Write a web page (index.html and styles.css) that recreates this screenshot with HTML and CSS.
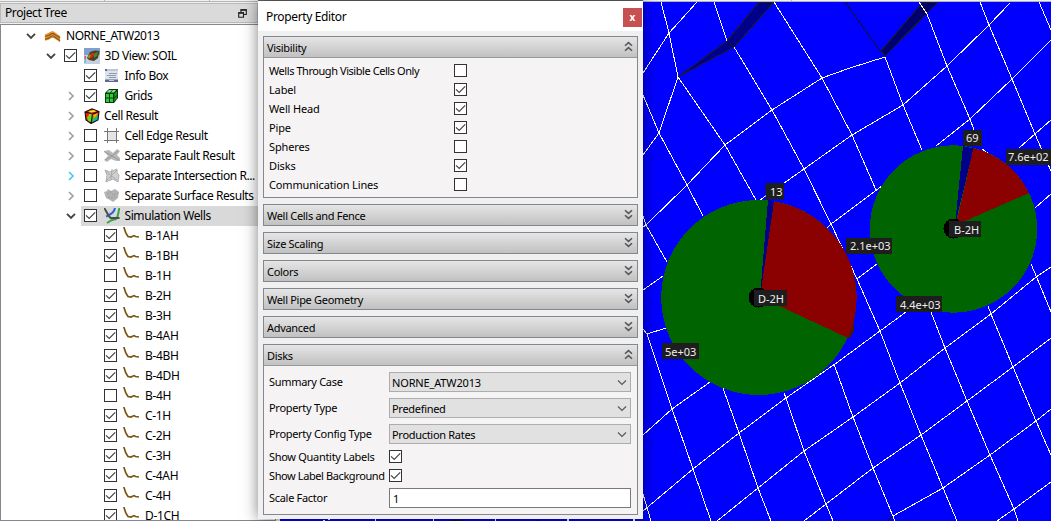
FILE: index.html
```html
<!DOCTYPE html>
<html lang="en">
<head>
<meta charset="utf-8">
<title>Property Editor</title>
<link rel="stylesheet" href="styles.css">
</head>
<body>
<svg class="defs" aria-hidden="true">
  <defs>
    <symbol id="tick" viewBox="0 0 13 13"><path d="M2 6.3 5.2 9.5 11.2 3.3" fill="none" stroke="#444" stroke-width="1.2"/></symbol>
    <symbol id="open" viewBox="0 0 10 10"><path d="M1 2.8 5 6.8 9 2.8" fill="none" stroke="#444" stroke-width="1.9"/></symbol>
    <symbol id="closed" viewBox="0 0 10 10"><path d="M3 1 7 5 3 9" fill="none" stroke="currentColor" stroke-width="1.7"/></symbol>
    <symbol id="well" viewBox="0 0 16 14"><path d="M.8 0 2.8 6 5 9.5 8 10 11 8.6 12.500 9.500 16 10" fill="none" stroke="#7b5410" stroke-width="1.7"/></symbol>
    <symbol id="down" viewBox="0 0 9 11"><path d="M1 1.2 4.5 4.4 8 1.2M1 6.2 4.5 9.4 8 6.2" fill="none" stroke="#555" stroke-width="1.5"/></symbol>
    <symbol id="up" viewBox="0 0 9 11"><path d="M1 4.8 4.5 1.6 8 4.8M1 9.8 4.5 6.6 8 9.8" fill="none" stroke="#555" stroke-width="1.5"/></symbol>
    <symbol id="arrow" viewBox="0 0 10 7"><path d="M1 1.5 5 5.5 9 1.5" fill="none" stroke="#555" stroke-width="1.1"/></symbol>
  </defs>
</svg>
<div class="app">
  <div class="topstrip"><i class="s1"></i><i class="s2"></i><i class="s3"></i><i class="s4"></i></div>
  <div class="workspace">
    <aside class="project">
      <header class="dock-title"><span>Project Tree</span>
        <svg width="9" height="9" viewBox="0 0 9 9"><path d="M3 3V.8H8.3V5.5H6M.7 3.7H5.5V8.3H.7Z" fill="none" stroke="#222" stroke-width="1.1"/><path d="M2.5 1H8.8M.2 4H6" stroke="#222" stroke-width="1.6"/></svg>
      </header>
      <div class="tree">
        <div class="row l0"><svg class="tw"><use href="#open"/></svg><svg class="ic wide" viewBox="0 0 18 16"><path d="M1 6.500 5 4.500 8 3H10L14 6 17 8V14.500L14 12.500 10 10H8L5 12 1 13Z" fill="#e8932c"/><path d="M1 8.500 5 7.300 8 5.500H10L13 7.500 17 10M1 11.500 5 10.300 8 8H10L13 10 17 13" fill="none" stroke="#8b5a22" stroke-width="1.300"/></svg><span>NORNE_ATW2013</span></div>
        <div class="row l1"><svg class="tw"><use href="#open"/></svg><i class="cb"><svg><use href="#tick"/></svg></i><svg class="ic" viewBox="0 0 16 16"><path d="M0 0H16V16H0Z" fill="#7f9fd0"/><path d="M0 7H16V16H0Z" fill="#c3d0e4"/><path d="M3 10 6 4 11 2.500 15.500 3 14 10 10 13 5 12Z" fill="#513c1c"/><path d="M4 8 8 5 11 5 9 9 5 11Z" fill="#c62e14"/><path d="M10 6 14 3.500 13 8 10 10Z" fill="#3d8c33"/><path d="M4 9 6 6 6.500 8 5 10.500Z" fill="#8faa20"/><path d="M.5 8H1.7V11H.5Z" fill="#e23"/><path d="M.5 11H1.7V15H.5Z" fill="#28c7dd"/></svg><span>3D View: SOIL</span></div>
        <div class="row l2"><i class="tw"></i><i class="cb"><svg><use href="#tick"/></svg></i><svg class="ic" viewBox="0 0 16 16"><path d="M1 1H14V14H1Z" fill="#dce3ea"/><path d="M1 1H14V3H1Z" fill="#bbc7d8"/><path d="M1 1H3V3H1ZM1 11.500H14V14H1Z" fill="#626397"/><path d="M5 5.5H13M3 7.5H12M5 9.5H12" stroke="#8d9aaa"/><path d="M5 12H10V13H5Z" fill="#c5c8df"/></svg><span>Info Box</span></div>
        <div class="row l2"><svg class="tw gray"><use href="#closed"/></svg><i class="cb"><svg><use href="#tick"/></svg></i><svg class="ic" viewBox="0 0 16 16"><path d="M1 5 5 1 14 1V10L10 15H1Z" fill="#0b3a11"/><path d="M2 6H5V9.5H2ZM6 6H9V9.5H6ZM2 10.5H5V14H2ZM6 10.5H9V14H6Z" fill="#31cc3e"/><path d="M2.5 4.5 5 2H8L6 4.5ZM7 4.5 9 2H12L10 4.5Z" fill="#86e889"/><path d="M10.3 5.5 13 3V7L10.3 9.5ZM10.3 10.5 13 8V10L10.3 13.5Z" fill="#159524"/></svg><span>Grids</span></div>
        <div class="row l2"><svg class="tw gray"><use href="#closed"/></svg><svg class="ic cube" viewBox="0 0 16 16"><path d="M1 4 8 .8 15 3.5 14 12 7 15.5 2 12Z" fill="#ed1c12"/><path d="M5 5 9 5 8 14.7 4 13Z" fill="#ffb000"/><path d="M3 9 6 7 8 6 8 14 4 13Z" fill="#6edb18"/><path d="M4 3 11 2 12 3.5 7 4.500Z" fill="#ffec20"/><path d="M9 9 14 7V12L8 15Z" fill="#21cb43"/><path d="M10 12 14 8V12L9 15Z" fill="#19a9d0"/><path d="M9 7 14 5 13 7 10 10Z" fill="#ffb000"/><path d="M1 4 8 .8 15 3.5 14 12 7 15.5 2 12Z M1 4 8.5 6 15 3.5M8.5 6 7 15.5" fill="none" stroke="#111" stroke-width="1.1"/></svg><span>Cell Result</span></div>
        <div class="row l2"><svg class="tw gray"><use href="#closed"/></svg><i class="cb"></i><svg class="ic" viewBox="0 0 16 16"><path d="M4 4H13V12H4Z" fill="#e5e5e5"/><path d="M3.5 0V15M12.5 0V15M0 3.5H15M0 12.5H15" stroke="#777"/></svg><span>Cell Edge Result</span></div>
        <div class="row l2"><svg class="tw gray"><use href="#closed"/></svg><i class="cb"></i><svg class="ic" viewBox="0 0 16 16"><path d="M0 3 5 2 9 5 13 1 16 3 13 7 16 10V13L12 13 7 11 3 14 0 12 4 8Z" fill="#b8b8b8"/><path d="M0 3.5 8 8 15 12M1 12 8 8 14 3" fill="none" stroke="#999" stroke-width="1"/></svg><span>Separate Fault Result</span></div>
        <div class="row l2"><svg class="tw blue"><use href="#closed"/></svg><i class="cb"></i><svg class="ic" viewBox="0 0 16 16"><path d="M1 2 6 4 13 1V5L15 7 14 14 9 11 2 14 3 7Z" fill="#d0d0d0" stroke="#b0b0b0"/><path d="M1 3 13 12M13 2 2 13M8 1 7 12" stroke="#aaa"/></svg><span>Separate Intersection R...</span></div>
        <div class="row l2"><svg class="tw gray"><use href="#closed"/></svg><i class="cb"></i><svg class="ic" viewBox="0 0 16 16"><path d="M0 4 3 3 4 1 7 3 11 1 15 4 14 10 9 14 6 12 2 10Z" fill="#b3b3b3"/><path d="M3 6 7 4 9 7 14 5M4 9 8 10 12 8" fill="none" stroke="#a3a3a3" stroke-width="1.4" stroke-dasharray="2 1"/></svg><span>Separate Surface Results</span></div>
        <div class="row l2 selected"><svg class="tw"><use href="#open"/></svg><i class="cb"><svg><use href="#tick"/></svg></i><svg class="ic" viewBox="0 0 16 16"><path d="M11 0C10 5 7 6 2 8.500" fill="none" stroke="#2a61d8" stroke-width="2"/><path d="M15.500 0C14 4 15 8 12 11L8 12 3 15" fill="none" stroke="#38a447" stroke-width="2"/><path d="M0 0C3 3 4 9 7 10H15.500" fill="none" stroke="#4b5145" stroke-width="2"/></svg><span>Simulation Wells</span></div>
        <div class="row l3"><i class="cb"><svg><use href="#tick"/></svg></i><svg class="ic"><use href="#well"/></svg><span>B-1AH</span></div>
        <div class="row l3"><i class="cb"><svg><use href="#tick"/></svg></i><svg class="ic"><use href="#well"/></svg><span>B-1BH</span></div>
        <div class="row l3"><i class="cb"></i><svg class="ic"><use href="#well"/></svg><span>B-1H</span></div>
        <div class="row l3"><i class="cb"><svg><use href="#tick"/></svg></i><svg class="ic"><use href="#well"/></svg><span>B-2H</span></div>
        <div class="row l3"><i class="cb"><svg><use href="#tick"/></svg></i><svg class="ic"><use href="#well"/></svg><span>B-3H</span></div>
        <div class="row l3"><i class="cb"><svg><use href="#tick"/></svg></i><svg class="ic"><use href="#well"/></svg><span>B-4AH</span></div>
        <div class="row l3"><i class="cb"><svg><use href="#tick"/></svg></i><svg class="ic"><use href="#well"/></svg><span>B-4BH</span></div>
        <div class="row l3"><i class="cb"><svg><use href="#tick"/></svg></i><svg class="ic"><use href="#well"/></svg><span>B-4DH</span></div>
        <div class="row l3"><i class="cb"></i><svg class="ic"><use href="#well"/></svg><span>B-4H</span></div>
        <div class="row l3"><i class="cb"><svg><use href="#tick"/></svg></i><svg class="ic"><use href="#well"/></svg><span>C-1H</span></div>
        <div class="row l3"><i class="cb"><svg><use href="#tick"/></svg></i><svg class="ic"><use href="#well"/></svg><span>C-2H</span></div>
        <div class="row l3"><i class="cb"><svg><use href="#tick"/></svg></i><svg class="ic"><use href="#well"/></svg><span>C-3H</span></div>
        <div class="row l3"><i class="cb"><svg><use href="#tick"/></svg></i><svg class="ic"><use href="#well"/></svg><span>C-4AH</span></div>
        <div class="row l3"><i class="cb"><svg><use href="#tick"/></svg></i><svg class="ic"><use href="#well"/></svg><span>C-4H</span></div>
        <div class="row l3"><i class="cb"><svg><use href="#tick"/></svg></i><svg class="ic"><use href="#well"/></svg><span>D-1CH</span></div>
      </div>
    </aside>
    <main class="view">
      <svg class="scene" width="771" height="519" viewBox="280 2 771 519">
        <path d="M280 2H1051V521H280Z" fill="#00f"/>
        <g shape-rendering="crispEdges">
          <path d="M678 77 727 41 759 2H774L734 47Z" fill="#00008b" stroke="#1a1a2a"/>
          <path d="M881 51 923 2H938L885 56Z" fill="#00006e" stroke="#1a1a2a"/>
          <path d="M845 2 881 52M727 41 734 47M923 2 927 14M893 516 888 520M450 520.5H463M536 520.5H538" stroke="#101030"/>
          <path class="mesh" d="M661 2 669 33 678 77 659 133 643 155M697 2 669 33 643 73M643 95 659 133 687 185 703 216M714 2 727 41M734 47 772 110 804 169 831 224 857 279 880 331 900 383 921 435 943 488 957 521M678 77 725 145 756 200M774 2 822 78 852 135 876 190M885 57 850 68 822 78 772 110 725 145 687 185 646 225 643 227M643 216 646 225 667 262M760 200 804 169 852 135 903 105 947 66 989 25 1010 3M827 228 831 224 882 186M919 2 927 14 947 66 970 119 974 130M885 57 903 105 922 150M980 2 989 25 1012 79 1035 134 1051 171M1039 2 1051 30M1051 40 1012 79 970 119 936 146M1051 120 1019 148M1035 208 1051 194M982 149 1006 166M643 290 663 276M643 329 647 334 666 328M647 334 672 409 693 469 711 521M643 435 672 409 710 382M723 388 739 433 758 488 771 521M643 511 693 469 739 433 786 398 835 364 880 331 906 312M784 393 786 398 804 451 826 504 833 521M717 521 758 488 804 451 853 417 900 383 945 348 991 314 1036 277 1051 267M834 364 853 417 873 468 895 521M804 521 826 504 873 468 921 435 967 401 1013 367 1051 338M643 494 651 521M857 279 877 264M931 312 945 348 967 401 990 455 1014 509 1018 521M988 306 991 314 1013 367 1036 421 1051 455M1031 264 1037 278 1051 312M893 516 943 488 990 455 1036 421 1051 409M997 521 1014 509 1051 482"/>
          <path d="M323 520H325V521H323ZM328 519H330V520H328ZM375 519H376V521H375ZM433 519H434V521H433ZM495 519H496V521H495ZM567 519H569V521H567ZM633 519H635V521H633Z" fill="#fff"/>
          <circle cx="758.7" cy="297.5" r="97.5" fill="#006400"/>
          <path d="M760 297 768 200 774 201.500V203Z" fill="#00008b"/>
          <path d="M760 297 774 201.500A97.500 97.500 0 0 1 848 338Z" fill="#8b0000"/>
          <path d="M848 338 854 322V331L850 338Z" fill="#431805"/>
          <circle cx="953.500" cy="229" r="83.700" fill="#006400"/>
          <path d="M955 225 963 146 973.500 148.500Z" fill="#00008b"/>
          <path d="M956 225 973.500 148A83.700 83.700 0 0 1 1029 193Z" fill="#8b0000"/>
          <circle cx="758.5" cy="297.500" r="10"/><circle cx="953.5" cy="228.5" r="10"/>
        </g>
        <g class="tags">
          <path d="M765.500 183H784V199.500H765.500ZM754 290H787V306H754ZM662 343H699V359H662ZM846 238H892V254H846ZM963 130H982V146H963ZM1006 149H1051V165H1006ZM949 221H981V237H949ZM896 296H942V312H896Z" fill="#1e1e1e"/>
          <text x="770" y="196">13</text><text x="758" y="303">D-2H</text><text x="665" y="356">5e+03</text><text x="850" y="250">2.1e+03</text><text x="966" y="142">69</text><text x="1008" y="161">7.6e+02</text><text x="954" y="234">B-2H</text><text x="900" y="309">4.4e+03</text>
        </g>
      </svg>
    </main>
  </div>
  <section class="editor">
    <header class="editor-title"><span>Property Editor</span><b class="close">x</b></header>
    <div class="groups">
      <div class="group vis">
        <div class="gh"><span>Visibility</span><svg><use href="#up"/></svg></div>
        <div class="checks">
          <div><label class="long">Wells Through Visible Cells Only</label><i class="cb"></i></div>
          <div><label>Label</label><i class="cb"><svg><use href="#tick"/></svg></i></div>
          <div><label>Well Head</label><i class="cb"><svg><use href="#tick"/></svg></i></div>
          <div><label>Pipe</label><i class="cb"><svg><use href="#tick"/></svg></i></div>
          <div><label>Spheres</label><i class="cb"></i></div>
          <div><label>Disks</label><i class="cb"><svg><use href="#tick"/></svg></i></div>
          <div><label>Communication Lines</label><i class="cb"></i></div>
        </div>
      </div>
      <div class="group"><div class="gh"><span>Well Cells and Fence</span><svg><use href="#down"/></svg></div></div>
      <div class="group"><div class="gh"><span>Size Scaling</span><svg><use href="#down"/></svg></div></div>
      <div class="group"><div class="gh"><span>Colors</span><svg><use href="#down"/></svg></div></div>
      <div class="group"><div class="gh"><span>Well Pipe Geometry</span><svg><use href="#down"/></svg></div></div>
      <div class="group"><div class="gh"><span>Advanced</span><svg><use href="#down"/></svg></div></div>
      <div class="group disks">
        <div class="gh"><span>Disks</span><svg><use href="#up"/></svg></div>
        <div class="form">
          <label>Summary Case</label><div class="select"><span class="name">NORNE_ATW2013</span><svg><use href="#arrow"/></svg></div>
          <label>Property Type</label><div class="select"><span>Predefined</span><svg><use href="#arrow"/></svg></div>
          <label>Property Config Type</label><div class="select"><span>Production Rates</span><svg><use href="#arrow"/></svg></div>
          <label>Show Quantity Labels</label><i class="cb"><svg><use href="#tick"/></svg></i>
          <label class="snug">Show Label Background</label><i class="cb"><svg><use href="#tick"/></svg></i>
          <label>Scale Factor</label><div class="input">1</div>
        </div>
      </div>
    </div>
  </section>
</div>
</body>
</html>
```
FILE: styles.css
```css
* { box-sizing: border-box; }
body { margin: 0; overflow: hidden; font-family: "Noto Sans", sans-serif; font-size: 12px; color: #000; }
.defs { position: absolute; width: 0; height: 0; }
.app { position: relative; width: 1051px; height: 521px; display: flex; flex-direction: column; overflow: hidden; background: #f0f0f0; }
.topstrip { height: 2px; flex: none; display: flex; gap: 1px; background: #b4b4b4; }
.topstrip i { background: #f0f0f0; height: 1px; }
.s1 { width: 104px; } .s2 { width: 104px; } .s3 { width: 581px; } .s4 { flex: 1; }
.workspace { flex: 1; display: flex; min-height: 0; }
.project { width: 280px; flex: none; display: flex; flex-direction: column; padding-top: 1px; overflow: hidden; }
.dock-title { height: 20px; flex: none; display: flex; justify-content: space-between; align-items: center; width: 258px; padding: 0 10px 0 4px; border: 1px solid #b9b9b9; background: #dadada; }
.dock-title span { letter-spacing: -.4px; line-height: 16px; }
.tree { margin-top: 1px; width: 276px; height: 500px; border: 1px solid #828790; background: #fff; overflow: hidden; padding-top: .5px; }
.row { height: 20px; display: flex; align-items: center; white-space: nowrap; }
.row span { letter-spacing: -.5px; line-height: 18px; }
.row.l0 span { letter-spacing: -.45px; }
.row.l1 span, .row.l2 span { margin-left: -1px; letter-spacing: -.42px; }
.row.l3 span { letter-spacing: -.33px; }
.tw { width: 10px; height: 10px; flex: none; margin-left: -.5px; margin-right: .5px; }
.gray { color: #a0a0a0; } .blue { color: #4cc8f2; }
.l0 { padding-left: 25px; } .l1 { padding-left: 45px; } .l2 { padding-left: 65px; } .l3 { padding-left: 103px; }
.cb { width: 13px; height: 13px; border: 1px solid #333; background: #fff; flex: none; display: block; }
.cb svg { width: 13px; height: 13px; margin: -1px; display: block; }
.row .tw + .cb { margin-left: 8px; }
.ic { width: 16px; height: 16px; flex: none; margin: 0 6px 0 6.5px; }
.wide { margin: 0 5px 0 8px; width: 17px; }
.cube { margin: 0 5px 0 8px; }
.l3 .ic { margin-right: 6px; margin-left: 6px; height: 14px; margin-top: -4px; }
.selected { background: linear-gradient(90deg, transparent 80px, #d9d9d9 80px); }
.view { flex: 1; min-width: 0; overflow: hidden; }
.scene { display: block; }
.mesh { fill: none; stroke: #fff; stroke-width: 1; }
.tags { font-size: 11px; fill: #eee; }
.editor { position: absolute; left: 258px; top: 1px; width: 385px; height: 518px; background: #f0f0f0; display: flex; flex-direction: column; box-shadow: 0 0 14px rgba(0,0,0,.5), 0 -1px 0 #666; }
.editor-title { height: 30px; flex: none; background: #fff; display: flex; justify-content: space-between; align-items: center; padding: 0 1px 0 8px; }
.editor-title span { letter-spacing: -.35px; }
.close { width: 19px; height: 19px; margin-top: 3px; background: #c75050; color: #fff; font-size: 10px; line-height: 18px; text-align: center; }
.groups { padding: 5px 5px 0; display: flex; flex-direction: column; gap: 6px; font-size: 11px; letter-spacing: -.3px; }
.group { border: 1px solid #828790; background: #f5f3f4; height: 22px; flex: none; }
.gh { height: 20px; display: flex; align-items: center; justify-content: space-between; padding: 0 4px 0 3px; background: linear-gradient(#e5e5e5, #c1c1c1); }
.gh svg { width: 9px; height: 11px; margin-top: -1px; }
.vis { height: 162px; }
.vis .gh, .disks .gh { height: 21px; border-bottom: 1px solid #999; }
.checks { padding: 3px 5px 0; }
.checks div { height: 19px; display: grid; grid-template-columns: 185px 13px; align-items: center; }
.checks label { letter-spacing: -.15px; }
.checks .long { letter-spacing: -.44px; }
.disks { height: 171px; }
.form { padding: 6px 6px 0 5px; display: grid; grid-template-columns: 120px 1fr; grid-template-rows: 20px 20px 20px 13px 13px 20px; row-gap: 6px; align-items: center; }
.form label { white-space: nowrap; line-height: 16px; }
.form .snug { letter-spacing: -.4px; }
.select { height: 20px; border: 1px solid #adadad; background: #e1e1e1; display: flex; align-items: center; justify-content: space-between; padding: 1px 3px 0 2px; }
.select .name { letter-spacing: -.15px; }
.select svg { width: 10px; height: 7px; }
.input { height: 20px; border: 1px solid #7a7a7a; background: #fff; line-height: 20px; padding-left: 3px; }
```
